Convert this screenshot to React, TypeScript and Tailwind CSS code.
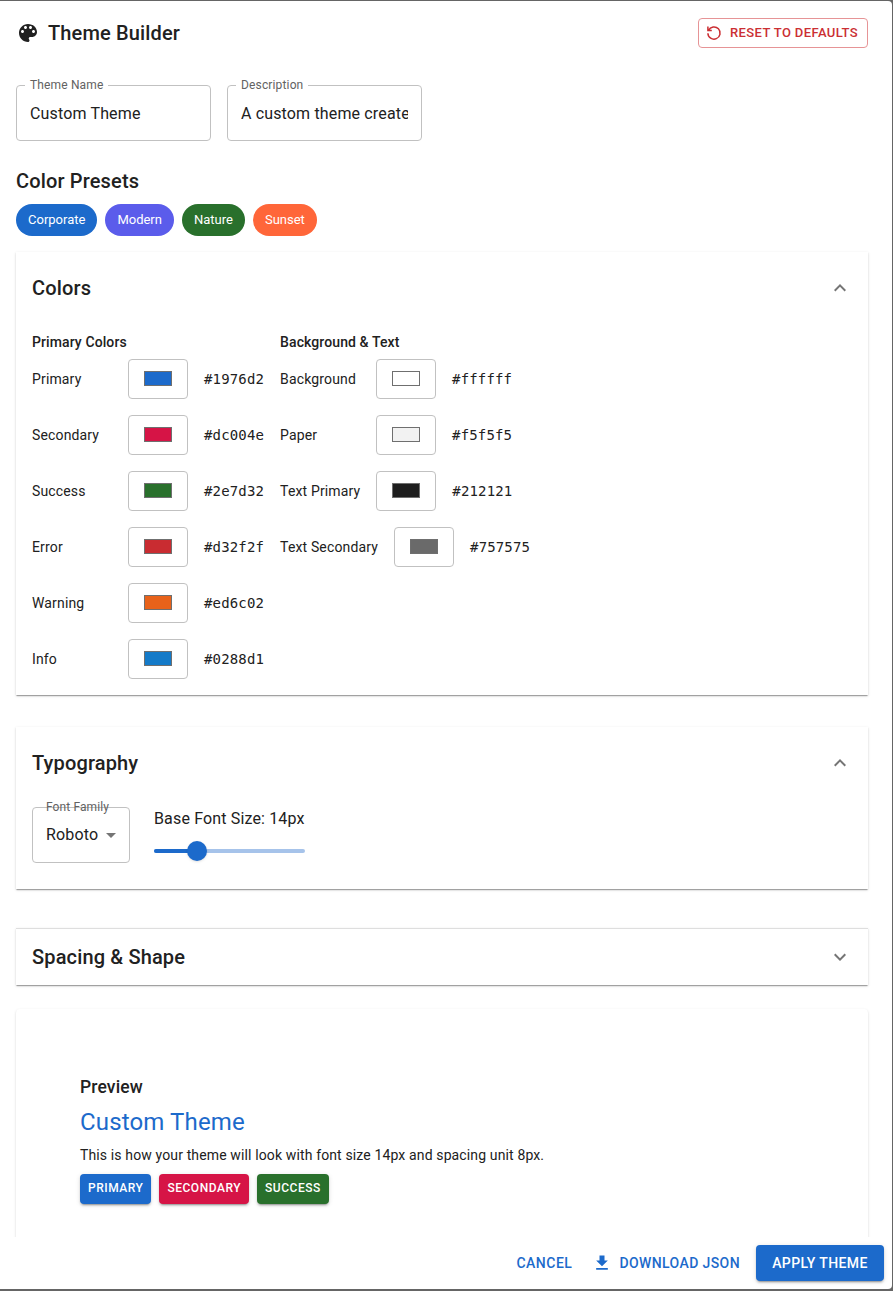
import type { ReactNode } from "react";

type Swatch = { label: string; value: string; fill: string };

const presets = [
  { name: "Corporate", fill: "#1c6acb" },
  { name: "Modern", fill: "#5b5ceb" },
  { name: "Nature", fill: "#29702c" },
  { name: "Sunset", fill: "#ff6639" },
];

const primaryColors: Swatch[] = [
  { label: "Primary", value: "#1976d2", fill: "#1c6acb" },
  { label: "Secondary", value: "#dc004e", fill: "#d61446" },
  { label: "Success", value: "#2e7d32", fill: "#29702c" },
  { label: "Error", value: "#d32f2f", fill: "#c92c31" },
  { label: "Warning", value: "#ed6c02", fill: "#e8621a" },
  { label: "Info", value: "#0288d1", fill: "#147ac8" },
];

const textColors: Swatch[] = [
  { label: "Background", value: "#ffffff", fill: "#ffffff" },
  { label: "Paper", value: "#f5f5f5", fill: "#f2f2f2" },
  { label: "Text Primary", value: "#212121", fill: "#1e1e1e" },
  { label: "Text Secondary", value: "#757575", fill: "#6a6a6a" },
];

const previewButtons = [
  { name: "Primary", fill: "#1c6acb" },
  { name: "Secondary", fill: "#d61446" },
  { name: "Success", fill: "#29702c" },
];

function Icon({ d, className }: { d: string; className: string }) {
  return (
    <svg viewBox="0 0 24 24" fill="currentColor" className={`shrink-0 ${className}`}>
      <path d={d} />
    </svg>
  );
}

const PALETTE =
  "M12 3c-4.97 0-9 4.03-9 9s4.03 9 9 9c.83 0 1.5-.67 1.5-1.5 0-.39-.15-.74-.39-1.01-.23-.26-.38-.61-.38-.99 0-.83.67-1.5 1.5-1.5H16c2.76 0 5-2.24 5-5 0-4.42-4.03-8-9-8zm-5.5 9c-.83 0-1.5-.67-1.5-1.5S5.67 9 6.5 9 8 9.67 8 10.5 7.33 12 6.5 12zm3-4C8.67 8 8 7.33 8 6.5S8.67 5 9.5 5s1.5.67 1.5 1.5S10.33 8 9.5 8zm5 0c-.83 0-1.5-.67-1.5-1.5S13.67 5 14.5 5s1.5.67 1.5 1.5S15.33 8 14.5 8zm3 4c-.83 0-1.5-.67-1.5-1.5S16.67 9 17.5 9s1.5.67 1.5 1.5-.67 1.5-1.5 1.5z";
const CHEVRON_UP = "M12 8l-6 6 1.41 1.41L12 10.83l4.59 4.58L18 14z";
const CHEVRON_DOWN = "M16.59 8.59L12 13.17 7.41 8.59 6 10l6 6 6-6z";
const DOWNLOAD = "M19 9h-4V3H9v6H5l7 7 7-7zM5 18v2h14v-2H5z";

function Field({ label, value }: { label: string; value: string }) {
  return (
    <fieldset className="h-[61px] w-[195px] min-w-0 rounded border border-[#c1c1c1] px-2 pb-0">
      <legend className="h-[11px] px-[5px] text-xs leading-[11px] tracking-[0.15px] text-[#626262]">{label}</legend>
      <div className="mx-[5px] mt-[11px] overflow-hidden whitespace-nowrap text-base leading-6 tracking-[0.15px]">{value}</div>
    </fieldset>
  );
}

function SwatchRow({ label, value, fill }: Swatch) {
  return (
    <div className="flex items-center gap-4">
      <span className="min-w-20 text-sm leading-5 tracking-[0.15px]">{label}</span>
      <div className="flex h-10 w-[60px] items-center justify-center rounded border border-[#c1c1c1] pb-px">
        <div className="h-[15px] w-7 border border-[#6f6f6f]" style={{ backgroundColor: fill }} />
      </div>
      <span className="font-['DejaVu_Sans_Mono',monospace] text-sm leading-5 tracking-[0.15px]">{value}</span>
    </div>
  );
}

function SwatchColumn({ title, rows }: { title: string; rows: Swatch[] }) {
  return (
    <div>
      <h3 className="mb-[6px] text-sm font-medium leading-[22px] tracking-[0.1px]">{title}</h3>
      <div className="flex flex-col gap-4">
        {rows.map((row) => (
          <SwatchRow key={row.label} {...row} />
        ))}
      </div>
    </div>
  );
}

const cardShadow =
  "shadow-[0px_2px_1px_-1px_rgba(0,0,0,0.2),0px_1px_1px_0px_rgba(0,0,0,0.14),0px_1px_3px_0px_rgba(0,0,0,0.12)]";

function Section({ title, open, className, children }: { title: string; open: boolean; className: string; children?: ReactNode }) {
  return (
    <section className={`bg-white px-4 ${cardShadow} ${className}`}>
      <header className={`flex items-center justify-between ${open ? "h-[72px]" : "h-14"}`}>
        <h2 className="text-xl font-medium leading-8 tracking-[0.15px]">{title}</h2>
        <Icon d={open ? CHEVRON_UP : CHEVRON_DOWN} className="size-6 text-[#757575]" />
      </header>
      {children}
    </section>
  );
}

export default function App() {
  return (
    <div className="h-[1291px] w-[893px] overflow-hidden bg-[#656565] pt-px pr-px pb-[2px] font-[Roboto,sans-serif] text-[#212121]">
      <main className="flex h-full flex-col overflow-hidden rounded-r-[4px] bg-white">
        <div className="min-h-0 flex-1 overflow-hidden px-4 pr-6">
          <header className="mt-4 flex h-8 items-center justify-between">
            <div className="flex items-center gap-2">
              <Icon d={PALETTE} className="size-6" />
              <h1 className="text-xl font-medium leading-8 tracking-[0.15px]">Theme Builder</h1>
            </div>
            <button className="flex h-[30px] w-[170px] items-center gap-[7px] whitespace-nowrap rounded border border-[#e69496] pl-[6px] text-[13px] font-medium tracking-[0.39px] text-[#cb2f33]">
              <svg viewBox="0 0 18 18" fill="none" stroke="currentColor" strokeWidth="1.5" className="size-[18px] shrink-0">
                <path d="M3.5 6.4A6.1 6.1 0 1 1 2.9 9.2M2.9 2.6v3.9h3.9" />
              </svg>
              RESET TO DEFAULTS
            </button>
          </header>

          <div className="mt-[31px] flex gap-4">
            <Field label="Theme Name" value="Custom Theme" />
            <Field label="Description" value="A custom theme created with the builder" />
          </div>

          <h2 className="mt-6 text-xl font-medium leading-8 tracking-[0.15px]">Color Presets</h2>
          <div className="mt-[7px] flex gap-2">
            {presets.map((preset) => (
              <button key={preset.name} className="h-8 rounded-full px-3 text-[13px] text-white" style={{ backgroundColor: preset.fill }}>
                {preset.name}
              </button>
            ))}
          </div>

          <Section title="Colors" open className="mt-4 h-[443px]">
            <div className="mt-[7px] flex gap-4">
              <SwatchColumn title="Primary Colors" rows={primaryColors} />
              <SwatchColumn title="Background & Text" rows={textColors} />
            </div>
          </Section>

          <Section title="Typography" open className="mt-8 h-[162px]">
            <div className="mt-2 flex gap-6">
              <div className="relative flex h-14 w-[98px] items-center rounded border border-[#c1c1c1] pl-[13px] text-base tracking-[0.15px]">
                <span className="absolute -top-[9px] left-[13px] whitespace-nowrap text-xs leading-4 tracking-[0.1px] text-[#626262]">Font Family</span>
                Roboto
                <span className="ml-2 border-x-[5px] border-t-[5px] border-x-transparent border-t-[#757575]" />
              </div>
              <div className="w-[151px]">
                <div className="whitespace-nowrap text-base leading-6 tracking-[0.15px]">Base Font Size: 14px</div>
                <div className="relative mt-[18px] h-1 rounded-full bg-[#a6c3ea]">
                  <div className="h-1 w-[43px] rounded-full bg-[#1c6acb]" />
                  <div className="absolute -top-2 left-[33px] size-5 rounded-full bg-[#1c6acb] shadow-sm" />
                </div>
              </div>
            </div>
          </Section>

          <Section title="Spacing & Shape" open={false} className="mt-[39px] h-[57px] border-t border-[#dedede]" />

          <section className={`mt-6 h-60 rounded bg-white px-16 pt-16 ${cardShadow}`}>
            <h3 className="text-[17.5px] font-medium leading-7 tracking-[0.13px]">Preview</h3>
            <h2 className="mt-[5px] text-2xl leading-8 tracking-[0.15px] text-[#1c6acb]">Custom Theme</h2>
            <p className="mt-[7px] text-sm leading-5 tracking-[0.132px]">This is how your theme will look with font size 14px and spacing unit 8px.</p>
            <div className="mt-[9px] flex gap-2">
              {previewButtons.map((button) => (
                <button
                  key={button.name}
                  className="h-[30px] rounded px-2 pb-[2px] text-xs font-medium uppercase tracking-[0.52px] text-white shadow-[0px_3px_1px_-2px_rgba(0,0,0,0.2),0px_2px_2px_0px_rgba(0,0,0,0.14),0px_1px_5px_0px_rgba(0,0,0,0.12)]"
                  style={{ backgroundColor: button.fill }}
                >
                  {button.name}
                </button>
              ))}
            </div>
          </section>
        </div>

        <footer className="flex h-[52px] shrink-0 items-center justify-end gap-2 pr-2 text-sm font-medium tracking-[0.4px] text-[#1c6acb]">
          <button className="h-9 pl-2 pr-1 tracking-[0.5px]">CANCEL</button>
          <button className="flex h-9 items-center gap-[7px] px-2">
            <Icon d={DOWNLOAD} className="size-5" />
            DOWNLOAD JSON
          </button>
          <button className="h-9 w-32 rounded bg-[#1c6acb] text-white shadow-[0px_3px_1px_-2px_rgba(0,0,0,0.2),0px_2px_2px_0px_rgba(0,0,0,0.14),0px_1px_5px_0px_rgba(0,0,0,0.12)]">APPLY THEME</button>
        </footer>
      </main>
    </div>
  );
}
